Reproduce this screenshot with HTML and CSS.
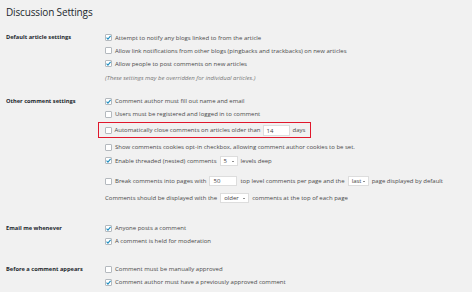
FILE: index.html
```html
<!DOCTYPE html>
<html>
<head>
<meta charset="utf-8">
<link rel="stylesheet" href="styles.css">
</head>
<body>
<div class="page">
  <h1 class="title">Discussion Settings</h1>

  <div class="section s1">
    <div class="label">Default article settings</div>
    <div class="fields">
      <div class="row"><span class="cb"><svg viewBox="0 0 10 10"><path d="M2.2 5.2 L4.2 7.3 L8 2.6"/></svg></span><span>Attempt to notify any blogs linked to from the article</span></div>
      <div class="row"><span class="cb"></span><span>Allow link notifications from other blogs (pingbacks and trackbacks) on new articles</span></div>
      <div class="row"><span class="cb"><svg viewBox="0 0 10 10"><path d="M2.2 5.2 L4.2 7.3 L8 2.6"/></svg></span><span>Allow people to post comments on new articles</span></div>
      <div class="row note">(These settings may be overridden for individual articles.)</div>
    </div>
  </div>

  <div class="section s2">
    <div class="label">Other comment settings</div>
    <div class="fields">
      <div class="row"><span class="cb"><svg viewBox="0 0 10 10"><path d="M2.2 5.2 L4.2 7.3 L8 2.6"/></svg></span><span>Comment author must fill out name and email</span></div>
      <div class="row"><span class="cb"></span><span>Users must be registered and logged in to comment</span></div>
      <div class="row highlight"><span class="cb"></span><span>Automatically close comments on articles older than</span><span class="input w-days">14</span><span class="after">days</span></div>
      <div class="row r-cookies"><span class="cb"></span><span>Show comments cookies opt-in checkbox, allowing comment author cookies to be set.</span></div>
      <div class="row r-threaded"><span class="cb"><svg viewBox="0 0 10 10"><path d="M2.2 5.2 L4.2 7.3 L8 2.6"/></svg></span><span>Enable threaded (nested) comments</span><span class="select w-levels">5<i class="arrow"></i></span><span class="after">levels deep</span></div>
      <div class="row r-pages"><span class="cb"></span><span>Break comments into pages with</span><span class="input w-pages">50</span><span class="after">top level comments per page and the</span><span class="select w-last">last<i class="arrow"></i></span><span class="after">page displayed by default</span></div>
      <div class="row r-order"><span>Comments should be displayed with the</span><span class="select w-order">older<i class="arrow"></i></span><span class="after">comments at the top of each page</span></div>
    </div>
  </div>

  <div class="section s3">
    <div class="label">Email me whenever</div>
    <div class="fields">
      <div class="row"><span class="cb"><svg viewBox="0 0 10 10"><path d="M2.2 5.2 L4.2 7.3 L8 2.6"/></svg></span><span>Anyone posts a comment</span></div>
      <div class="row"><span class="cb"><svg viewBox="0 0 10 10"><path d="M2.2 5.2 L4.2 7.3 L8 2.6"/></svg></span><span>A comment is held for moderation</span></div>
    </div>
  </div>

  <div class="section s4">
    <div class="label">Before a comment appears</div>
    <div class="fields">
      <div class="row"><span class="cb"></span><span>Comment must be manually approved</span></div>
      <div class="row"><span class="cb"><svg viewBox="0 0 10 10"><path d="M2.2 5.2 L4.2 7.3 L8 2.6"/></svg></span><span>Comment author must have a previously approved comment</span></div>
    </div>
  </div>
</div>
</body>
</html>
```

FILE: styles.css
```css
html, body {
  margin: 0;
  padding: 0;
  background: #ffffff;
}
.page {
  width: 472px;
  height: 292px;
  box-sizing: border-box;
  padding-left: 6px;
  background: #f1f1f1;
  font-family: "Open Sans", "Noto Sans", sans-serif;
  font-size: 6px;
  color: #4a4a4a;
  overflow: hidden;
}
.title {
  margin: 0 0 6px 0;
  font-size: 10px;
  letter-spacing: -0.15px;
  line-height: 25px;
  font-weight: 400;
  color: #23282d;
}
.section {
  display: grid;
  grid-template-columns: 99px 1fr;
}
.s2 { margin-top: 8.5px; }
.s3 { margin-top: 15.5px; }
.s4 { margin-top: 15px; }
.label {
  font-weight: 700;
  font-size: 5.7px;
  color: #23282d;
  line-height: 13px;
  height: 13px;
  white-space: nowrap;
}
.row {
  display: flex;
  align-items: center;
  height: 13px;
  white-space: nowrap;
}
.note {
  height: 16px;
  font-style: italic;
  color: #777;
}
.cb {
  flex: none;
  width: 7px;
  height: 7px;
  box-sizing: border-box;
  border: 0.7px solid #b4b9be;
  background: #fff;
  border-radius: 1px;
  margin-right: 3px;
  display: flex;
  align-items: center;
  justify-content: center;
}
.cb svg {
  width: 7px;
  height: 7px;
  overflow: visible;
}
.cb svg path {
  fill: none;
  stroke: #1e8cbe;
  stroke-width: 1.5;
}
.highlight {
  height: 16px;
  box-sizing: border-box;
  margin: 1.5px 0 1.5px -7px;
  padding-left: 5.5px;
  width: 213px;
  border: 1.5px solid #e0172c;
}
.r-cookies { height: 15px; }
.r-threaded { height: 12px; }
.r-pages { height: 18px; margin-top: 5.5px; }
.r-order { height: 16px; }
.input, .select {
  flex: none;
  box-sizing: border-box;
  height: 10px;
  line-height: 9px;
  background: #fff;
  border: 0.6px solid #ddd;
  padding-left: 3px;
  color: #444;
  position: relative;
  margin-left: 3px;
}
.w-days { width: 27px; height: 11px; line-height: 10px; margin-left: 2px; }
.w-levels { width: 18px; }
.w-pages { width: 28px; }
.w-last { width: 21px; }
.w-order { width: 29px; }
.after { margin-left: 3px; }
.arrow {
  position: absolute;
  right: 3px;
  top: 4px;
  width: 0;
  height: 0;
  border-left: 1.3px solid transparent;
  border-right: 1.3px solid transparent;
  border-top: 1.8px solid #222;
}
```
